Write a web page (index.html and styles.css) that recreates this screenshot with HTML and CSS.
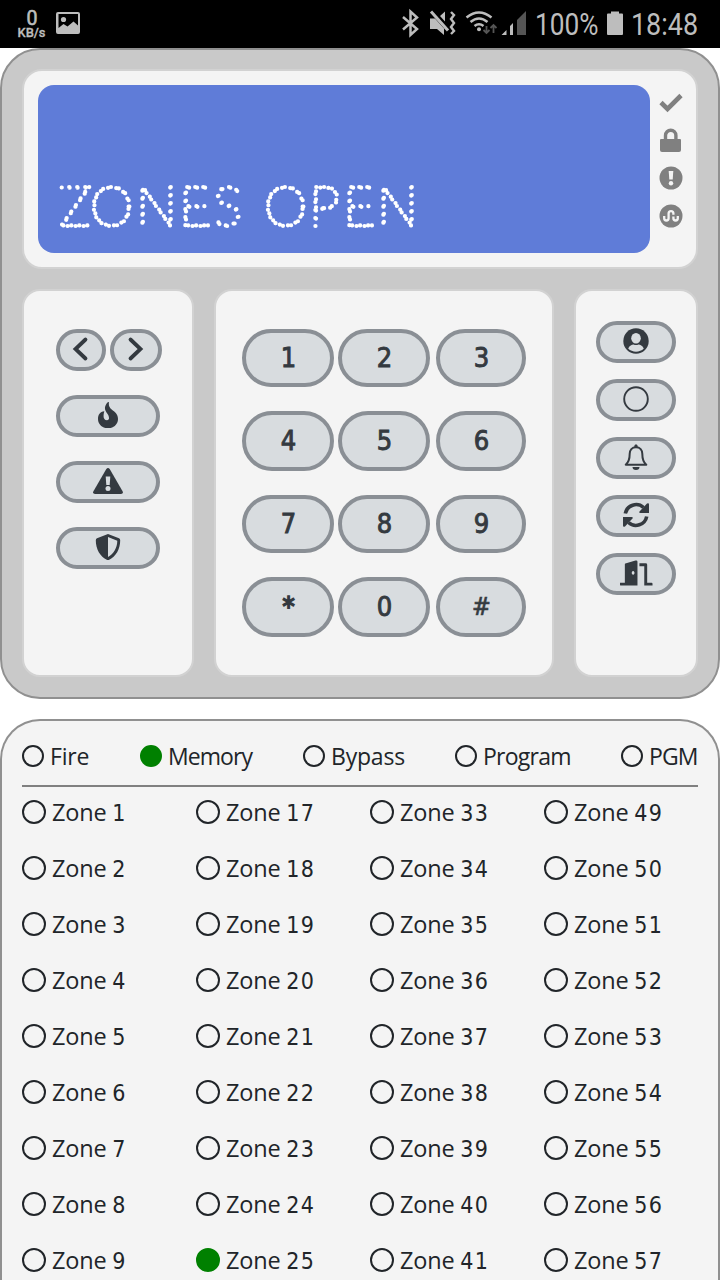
FILE: index.html
```html
<!DOCTYPE html>
<html lang="en">
<head>
<meta charset="utf-8">
<title>Alarm keypad</title>
<link rel="stylesheet" href="styles.css">
</head>
<body>
<header class="status">
  <svg width="720" height="48" viewBox="0 0 720 48" fill="#bdbdbd">
    <text class="speed" x="26.500" y="24.500" font-size="20" textLength="11" lengthAdjust="spacingAndGlyphs">0</text>
    <text class="unit" x="17.500" y="36.500" font-size="12" textLength="28" lengthAdjust="spacingAndGlyphs">KB/s</text>
    <path fill-rule="evenodd" d="M58 12h20q2 0 2 2v18q0 2-2 2H58q-2 0-2-2V14q0-2 2-2zm.5 2v14l5-4 4 2.500 6-5 4.500 4V14z"/>
    <circle cx="63.500" cy="19.500" r="2.600"/>
    <path d="M403 17l14 12-6.500 6V11.500l6.500 6-14 12" fill="none" stroke="#bdbdbd" stroke-width="2.500"/>
    <path d="M430 18.500h5l9 10v6.500l-7-6h-7zM440 16l5-4.500v10z"/>
    <path d="M431 11.500l17 19" stroke="#bdbdbd" stroke-width="3"/>
    <path d="M451 12l3 3-3 4 3 4-3 4 3 4-3 3" fill="none" stroke="#bdbdbd" stroke-width="2.400"/>
    <g fill="none" stroke="#bdbdbd" stroke-width="2.500"><path d="M466.500 17.500q12.500-10 25 0M470.500 22q8.500-7 17 0M474.500 26q4.500-3.500 9 0"/></g>
    <circle cx="479" cy="29.300" r="2"/>
    <path d="M486.500 26v7m-3-3l3 3 3-3M493.500 33v-8m-3 3l3-3 3 3" fill="none" stroke="#555" stroke-width="1.800"/>
    <path d="M501.500 35l5-5v5zM510 35v-9l3-3v12z"/><path fill="#555" d="M517 35V20l9-9v24z"/>
    <text x="535" y="34.500" font-size="31" textLength="63.500" lengthAdjust="spacingAndGlyphs">100%</text>
    <path d="M608 13.500h3v-2h8v2h3q1 0 1 1V34q0 1-1 1h-14q-1 0-1-1V14.500q0-1 1-1z"/>
    <text x="631" y="34.500" font-size="31" textLength="67" lengthAdjust="spacingAndGlyphs">18:48</text>
  </svg>
</header>

<main>
<section class="keypad">
  <div class="display">
    <div class="lcd">
      <svg width="612" height="168" viewBox="38 85 612 168"><text class="dots" y="226" x="59 90 136 179 213 264 309 343 377">ZONESOPEN</text></svg>
    </div>
    <div class="leds">
      <svg viewBox="0 0 24 24"><path d="M2 12.500l6.500 6.500L22 5.500" fill="none" stroke="#808080" stroke-width="4.600"/></svg>
      <svg viewBox="0 0 24 24"><path d="M3 11h18q1 0 1 1v10q0 2-2 2H3q-2 0-2-2V12q0-1 1-1z"/><path d="M6.500 12V7.500a5.200 5.200 0 0 1 10.400 0V12" fill="none" stroke="#808080" stroke-width="3.400"/></svg>
      <svg viewBox="0 0 24 24"><circle cx="12" cy="12" r="11.500"/><path fill="#f4f4f4" d="M9.700 5h4.600l-.6 8.500h-3.400z"/><circle cx="12" cy="17.300" r="2.200" fill="#f4f4f4"/></svg>
      <svg viewBox="0 0 24 24"><circle cx="12" cy="12" r="11.500"/><path d="M5.200 12v2.300a2.200 2.200 0 0 0 4.400 0V9.500a2.400 2.400 0 0 1 4.800 0v1.300M14.400 12.500v1.800a2.200 2.200 0 0 0 4.400 0V12" fill="none" stroke="#f4f4f4" stroke-width="2.300"/></svg>
    </div>
  </div>

  <div class="columns">
    <div class="card side">
      <div class="arrows">
        <button class="key"><svg viewBox="0 0 26 26"><path d="M17.500 3.500L7.500 13l10 9.500" class="chev"/></svg></button>
        <button class="key"><svg viewBox="0 0 26 26"><path d="M7.500 3.500L17.500 13l-10 9.500" class="chev"/></svg></button>
      </div>
      <button class="key"><svg viewBox="0 0 26 26"><path d="M13 0c-4 4-3.600 7.500-1.500 10.500 3 3.500 3.500 7.500.5 7.700-3.500 0-4.200-3.200-2.700-8.900C5 9.500 3 13 3 17c0 5.500 4.500 9.300 10 9.300S23 22.500 23 17c0-5-3.200-7-6.300-9.500C14 5.200 13.500 3 14 .2z"/></svg></button>
      <button class="key"><svg class="wide" viewBox="0 0 30 26"><path d="M13.300 1q1.700-2 3.400 0l13 22.500q.8 2.500-1.700 2.500H2Q-.5 26 .3 23.500z"/><path fill="#d8dcdf" d="M12.700 8.500h4.600l-.6 8.500h-3.400z"/><circle cx="15" cy="20.500" r="2.500" fill="#d8dcdf"/></svg></button>
      <button class="key"><svg viewBox="0 0 26 26"><path fill-rule="evenodd" d="M13 0l11 4.200q1.200.4 1.200 2C25.200 15 21 22.500 13.800 26q-.8.400-1.600 0C5 22.500.8 15 .8 6.200q0-1.600 1.200-2zm0 3v20c5.500-3 9.200-9 9.300-16.300z"/></svg></button>
    </div>

    <div class="card numbers">
      <button class="key">1</button><button class="key">2</button><button class="key">3</button>
      <button class="key">4</button><button class="key">5</button><button class="key">6</button>
      <button class="key">7</button><button class="key">8</button><button class="key">9</button>
      <button class="key star">*</button><button class="key">0</button><button class="key hash">#</button>
    </div>

    <div class="card actions">
      <button class="key"><svg viewBox="0 0 26 26"><circle cx="13" cy="13" r="12.700"/><ellipse cx="13" cy="10.300" rx="4.800" ry="5.300" fill="#d8dcdf"/><path fill="#d8dcdf" d="M5.200 20.500c1.500-3 3.500-4 5.300-4q2.500 1 5 0c1.800 0 3.800 1 5.300 4-4 4.200-11.600 4.200-15.600 0z"/></svg></button>
      <button class="key"><svg viewBox="0 0 26 26"><circle cx="13" cy="13" r="11.800" fill="none" stroke="#343a40" stroke-width="1.900"/></svg></button>
      <button class="key"><svg viewBox="0 0 26 26"><path d="M13 3.200c-4 0-6.300 2.800-6.300 6.600 0 5-1 8.500-4 10.900h20.600c-3-2.400-4-5.900-4-10.900 0-3.800-2.300-6.600-6.300-6.600z" fill="none" stroke="#343a40" stroke-width="2" stroke-linejoin="round"/><path d="M11.200 3a1.800 2.800 0 0 1 3.600 0M9.500 23h7a3.500 3 0 0 1-7 0z"/></svg></button>
      <button class="key"><svg viewBox="0 0 26 26"><path d="M2.300 11.500A11 11 0 0 1 20.500 5.500M23.700 14.500A11 11 0 0 1 5.500 20.500" fill="none" stroke="#343a40" stroke-width="3.600"/><path d="M24 1.500q2-1 2 1V11h-8.500q-2 0-1-1.500zM2 24.500q-2 1-2-1V15h8.500q2 0 1 1.500z"/></svg></button>
      <button class="key"><svg class="door" viewBox="0 0 34 26"><path fill-rule="evenodd" d="M5.500 3.300L16 .1q2-.5 2 1.400V26H1q-1 0-1-1v-2h5V4q0-.5.500-.7zM13.500 11a1.400 1.900 0 1 0 .01 0z"/><path d="M20 3h6.500q1.500 0 1.500 1.500V23h4.500q1 0 1 1v2h-8.500V6H20z"/></svg></button>
    </div>
  </div>
</section>

<section class="monitor">
  <div class="modes">
    <span class="item"><i class="dot"></i><span class="name">Fire</span></span>
    <span class="item"><i class="dot on"></i><span class="name memory">Memory</span></span>
    <span class="item"><i class="dot"></i><span class="name">Bypass</span></span>
    <span class="item"><i class="dot"></i><span class="name program">Program</span></span>
    <span class="item"><i class="dot"></i><span class="name pgm">PGM</span></span>
  </div>
  <div class="zones" id="zones"></div>
</section>
</main>
<script src="zones.js"></script>
</body>
</html>
```

FILE: zones.js
```js
const active = [25];
const grid = document.getElementById('zones');
for (let row = 1; row <= 9; row++) {
  for (let col = 0; col < 4; col++) {
    const n = row + col * 16;
    const item = document.createElement('span');
    item.className = 'item';
    item.innerHTML = `<i class="dot${active.includes(n) ? ' on' : ''}"></i><span class="name">Zone <span class="num">${n}</span></span>`;
    grid.append(item);
  }
}
```

FILE: styles.css
```css
* { box-sizing: border-box; }
body { margin: 0; height: 1280px; overflow: hidden; background: #fff; font-family: "Open Sans", "Noto Sans", sans-serif; color: #212529; }
.status { height: 48px; background: #000; }
.status svg { display: block; font-family: Roboto, sans-serif; }
.status .speed { stroke: #bdbdbd; stroke-width: .6px; }
.status .unit { font-weight: 500; stroke: #bdbdbd; stroke-width: .3px; }

.keypad { height: 651px; padding: 19px 20px; border: 2px solid #909090; border-radius: 40px; background: #c9c9c9; }
.display { display: flex; height: 200px; padding: 14px; border: 2px solid #d2d2d2; border-radius: 20px; background: #f4f4f4; }
.lcd { flex: none; width: 612px; height: 168px; border-radius: 16px; background: #5f7cd8; }
.lcd svg { display: block; }
.dots { font-family: Lato, sans-serif; font-weight: 100; font-size: 55px; fill: none; stroke: #fff; stroke-width: 4.200px; stroke-linecap: round; stroke-dasharray: 0 8; }
.leds { flex: none; display: flex; flex-direction: column; gap: 14px; padding: 5px 0 0 8.500px; }
.leds svg { width: 24px; height: 24px; fill: #808080; }

.columns { display: grid; grid-template-columns: 172px 340px 124px; gap: 20px; margin-top: 20px; }
.card { height: 388px; border: 2px solid #d2d2d2; border-radius: 18px; background: #f4f4f4; }
.side { display: flex; flex-direction: column; gap: 24px; padding: 38px 30px 0 32px; }
.side > .key { width: 104px; }
.arrows { display: grid; grid-template-columns: 50px 52px; gap: 4px; }
.actions { display: flex; flex-direction: column; gap: 16px; padding: 30px 20px; }
.numbers { display: grid; grid-template-columns: 92px 92px 90px; grid-template-rows: 58px 60px 58px 60px; column-gap: 4px; row-gap: 24px; padding: 38px 26px; align-content: start; }
.numbers .key:nth-child(3n) { margin-left: 2px; width: 90px; }
.key { display: flex; align-items: center; justify-content: center; height: 42px; margin: 0; padding: 0 0 2px; border: 4px solid #8a8f95; border-radius: 21px; background: #d8dcdf; color: #343a40; }
.numbers .key { height: 100%; padding: 0 0 2px 1px; border-radius: 30px; font: 27px "DejaVu Sans Condensed", "DejaVu Sans", sans-serif; -webkit-text-stroke: .9px #343a40; }
.numbers .star { -webkit-text-stroke-width: 1.600px; }
.numbers .hash { font-size: 25px; -webkit-text-stroke-width: .7px; }
.key svg { display: block; flex: none; width: 26px; height: 26px; fill: #343a40; }
.key svg.wide { width: 30px; }
.key svg.door { width: 33px; }
.chev { fill: none; stroke: #343a40; stroke-width: 3.800; stroke-linecap: round; }

.monitor { height: 561px; overflow: hidden; margin-top: 20px; padding: 0 20px; border: 2px solid #909090; border-bottom: 0; border-radius: 40px 40px 0 0; background: #f4f4f4; }
.item { display: flex; align-items: center; gap: 6px; white-space: nowrap; }
.dot { flex: none; width: 24px; height: 24px; border: 2px solid #212529; border-radius: 50%; }
.dot.on { border-color: #008000; background: #008000; }
.name { font-size: 23.500px; line-height: 32px; letter-spacing: -.2px; }
.modes { display: grid; grid-template-columns: 118px 163px 152px 166px 77px; height: 66px; padding-top: 6px; border-bottom: 2px solid #808080; }
.modes .dot { width: 22px; height: 22px; }
.modes .name { font-size: 23px; }
.modes .memory { letter-spacing: -.950px; }
.modes .program { letter-spacing: -.750px; }
.modes .pgm { letter-spacing: -.900px; }
.zones { display: grid; grid-template-columns: repeat(4, 174px); grid-auto-rows: 56px; margin-top: -3px; }
.num { font-family: "DejaVu Sans Condensed", "DejaVu Sans", sans-serif; font-size: 23px; letter-spacing: 1.200px; }
```
